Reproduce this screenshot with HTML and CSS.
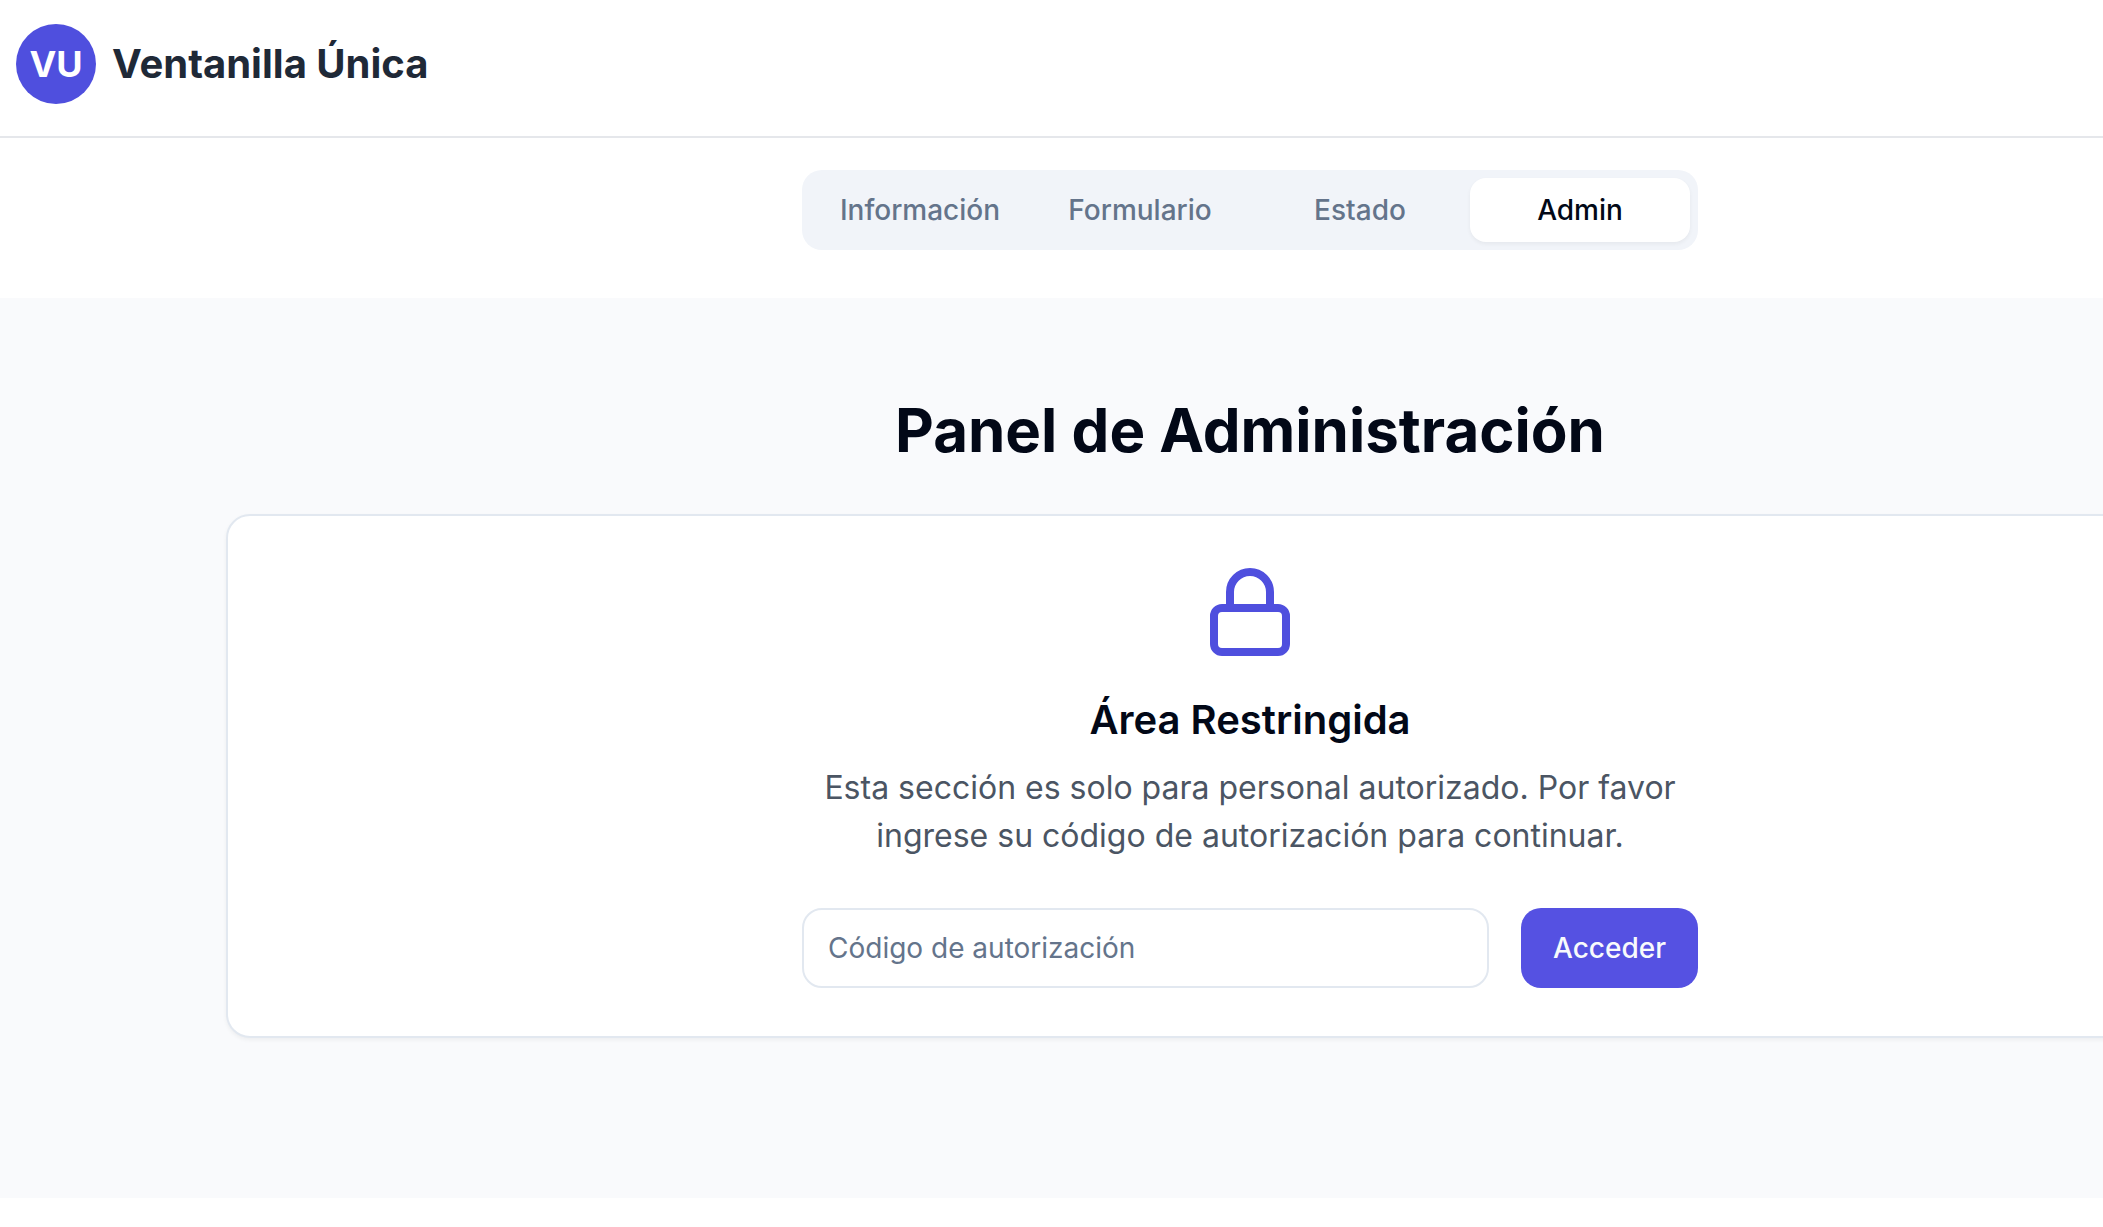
FILE: index.html
```html
<!DOCTYPE html>
<html lang="es">
<head>
  <meta charset="utf-8">
  <meta name="viewport" content="width=device-width, initial-scale=1">
  <title>Ventanilla Única</title>
  <link rel="stylesheet" href="styles.css">
</head>
<body>
  <div class="page">
    <header class="header">
      <span class="logo">VU</span>
      <span class="brand">Ventanilla Única</span>
    </header>
    <nav class="nav">
      <div class="tabs" role="tablist">
        <button class="tab" type="button" role="tab" aria-selected="false">Información</button>
        <button class="tab" type="button" role="tab" aria-selected="false">Formulario</button>
        <button class="tab" type="button" role="tab" aria-selected="false">Estado</button>
        <button class="tab tab-active" type="button" role="tab" aria-selected="true">Admin</button>
      </div>
    </nav>
    <main class="main">
      <h1 class="title">Panel de Administración</h1>
      <section class="card">
        <svg class="lock" viewBox="0 0 24 24" fill="none" stroke="currentColor" stroke-width="2" stroke-linecap="round" stroke-linejoin="round" aria-hidden="true">
          <rect x="3" y="11" width="18" height="11" rx="2" ry="2"/>
          <path d="M7 11V7a5 5 0 0 1 10 0v4"/>
        </svg>
        <h2 class="subtitle">Área Restringida</h2>
        <p class="text">Esta sección es solo para personal autorizado. Por favor ingrese su código de autorización para continuar.</p>
        <form class="form">
          <input class="input" type="text" placeholder="Código de autorización" aria-label="Código de autorización">
          <button class="submit" type="submit">Acceder</button>
        </form>
      </section>
    </main>
  </div>
</body>
</html>
```

FILE: styles.css
```css
*,
*::before,
*::after {
  box-sizing: border-box;
}

html {
  scrollbar-width: none;
}

body {
  margin: 0;
  background: #ffffff;
  color: #020817;
  font-family: Inter, "Liberation Sans", sans-serif;
}

button,
input {
  font: inherit;
}

.page {
  min-width: 2500px;
}

.header {
  display: flex;
  align-items: center;
  gap: 16px;
  padding: 24px 16px 32px;
  border-bottom: 2px solid #e5e7eb;
}

.logo {
  display: flex;
  align-items: center;
  justify-content: center;
  width: 80px;
  height: 80px;
  border-radius: 50%;
  background: #4f4fde;
  color: #ffffff;
  font-size: 36px;
  font-weight: 700;
}

.brand {
  color: #1f2937;
  font-size: 40px;
  font-weight: 700;
  line-height: 56px;
}

.nav {
  padding: 32px 32px 48px;
}

.tabs {
  display: grid;
  grid-template-columns: repeat(4, 1fr);
  max-width: 896px;
  margin: 0 auto;
  padding: 8px;
  border-radius: 20px;
  background: #f1f4f9;
}

.tab {
  padding: 12px 24px;
  border: 0;
  border-radius: 16px;
  background: transparent;
  color: #64748b;
  font-size: 28px;
  font-weight: 500;
  line-height: 40px;
}

.tab-active {
  background: #ffffff;
  color: #020817;
  box-shadow: 0 2px 4px rgba(0, 0, 0, 0.05);
}

.main {
  padding: 96px 32px 160px;
  background: #f9fafc;
}

.title {
  margin: 0 0 48px;
  font-size: 60px;
  font-weight: 700;
  line-height: 72px;
  text-align: center;
}

.card {
  display: flex;
  flex-direction: column;
  align-items: center;
  max-width: 2048px;
  margin: 0 auto;
  padding: 48px;
  border: 2px solid #e2e8f0;
  border-radius: 24px;
  background: #ffffff;
  box-shadow: 0 2px 4px rgba(0, 0, 0, 0.05);
}

.lock {
  width: 96px;
  height: 96px;
  margin-bottom: 32px;
  color: #4f4fde;
}

.subtitle {
  margin: 0 0 16px;
  font-size: 40px;
  font-weight: 600;
  line-height: 56px;
}

.text {
  max-width: 896px;
  margin: 0 0 48px;
  color: #4b5563;
  font-size: 32px;
  line-height: 48px;
  text-align: center;
}

.form {
  display: flex;
  gap: 32px;
  width: 100%;
  max-width: 896px;
}

.input {
  flex: 1;
  min-width: 0;
  height: 80px;
  padding: 16px 24px;
  border: 2px solid #e2e8f0;
  border-radius: 20px;
  background: #ffffff;
  color: #020817;
  font-size: 28px;
}

.input::placeholder {
  color: #64748b;
  opacity: 1;
}

.submit {
  height: 80px;
  padding: 0 32px;
  border: 0;
  border-radius: 20px;
  background: #5551e2;
  color: #f8fafc;
  font-size: 28px;
  font-weight: 500;
}
```
